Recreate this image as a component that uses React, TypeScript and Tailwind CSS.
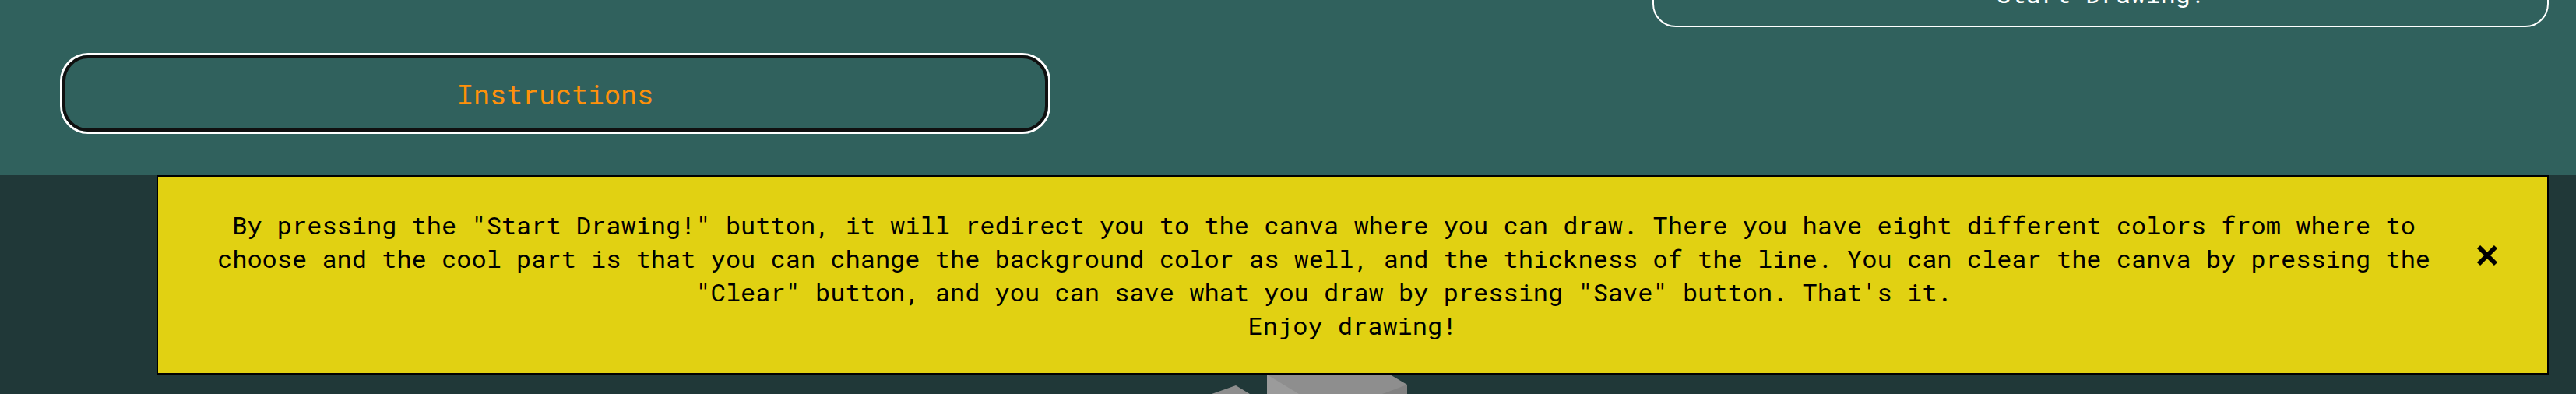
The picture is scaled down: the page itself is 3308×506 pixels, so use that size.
export default function App() {
  return (
    <main className="min-h-screen overflow-hidden bg-[#203838] font-['Roboto_Mono','Liberation_Mono',monospace] text-[32px] leading-[43px] text-black">
      <section className="-mt-13 flex flex-col bg-[#30615d] pr-[35px] pb-[53px] pl-[77px]">
        <button type="button" className="w-[36%] self-end rounded-[30px] border-2 border-white py-5 text-white">
          Start Drawing!
        </button>
        <button
          type="button"
          className="mt-[33px] flex w-[39.8%] rounded-[36px] border-3 border-white text-[35px] text-[#ff910a]"
        >
          <span className="grow rounded-[33px] border-4 border-[#101010] pt-6 pb-[23px]">Instructions</span>
        </button>
      </section>
      <section className="mr-[35px] ml-[201px] border-2 border-black bg-[#e1d112] p-10 text-center">
        <button type="button" aria-label="Close" className="float-right px-[23px] py-[47px]">
          <svg viewBox="0 0 28 28" className="size-7" stroke="currentColor" strokeWidth="6">
            <path d="M3 3 25 25M25 3 3 25" />
          </svg>
        </button>
        <p>
          By pressing the "Start Drawing!" button, it will redirect you to the canva where you can draw. There you have
          eight different colors from where to choose and the cool part is that you can change the background color as
          well, and the thickness of the line. You can clear the canva by pressing the "Clear" button, and you can save
          what you draw by pressing "Save" button. That's it.
          <br />
          Enjoy drawing!
        </p>
      </section>
      <svg viewBox="0 0 252 25" className="ml-[1556px] h-[25px] w-[252px]" aria-hidden="true">
        <path d="M0 25 31 14 49 25Z" fill="#8e8e8e" />
        <path d="M71 0H229L251 13V25H71Z" fill="#8e8e8e" />
        <path d="M71 0 112 25H71Z" fill="#9b9b9b" />
        <path d="M251 13V25H219Z" fill="#828282" />
      </svg>
    </main>
  );
}
